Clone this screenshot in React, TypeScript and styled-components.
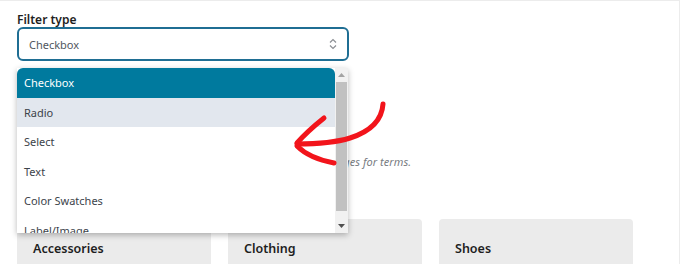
import React from 'react'
import styled, { createGlobalStyle } from 'styled-components'

const GlobalStyle = createGlobalStyle`
  html, body { margin: 0; padding: 0; background: #fff; }
  body { font-family: "Noto Sans", "Open Sans", sans-serif; }
`

const options = ['Checkbox', 'Radio', 'Select', 'Text', 'Color Swatches', 'Label/Image']
const categories = ['Accessories', 'Clothing', 'Shoes']

const Frame = styled.div`
  position: relative;
  width: 680px;
  height: 264px;
  box-sizing: border-box;
  border-top: 1px solid #ececec;
  border-right: 1px solid #ececec;
  overflow: hidden;
  padding: 11px 0 0 17px;
`

const Label = styled.div`
  font-size: 12px;
  font-weight: 600;
  color: #1e1e1e;
  line-height: 15px;
`

const SelectWrap = styled.div`
  position: relative;
  width: 332px;
`

const SelectBox = styled.div`
  height: 34px;
  box-sizing: border-box;
  border: 2px solid #1f6e93;
  border-radius: 6px;
  display: flex;
  align-items: center;
  justify-content: space-between;
  padding: 0 10px 0 10px;
  font-size: 11px;
  color: #50575e;
`

const Listbox = styled.div`
  position: absolute;
  top: 41px;
  left: 0;
  width: 331px;
  height: 165px;
  display: flex;
  background: #fff;
  box-shadow: 0 2px 6px rgba(0, 0, 0, 0.28);
  z-index: 2;
`

const Options = styled.div`
  flex: 1;
  overflow: hidden;
`

const Option = styled.div<{ $state?: 'selected' | 'hover' }>`
  height: 29.5px;
  display: flex;
  align-items: center;
  padding-left: 7px;
  font-size: 11px;
  color: ${p => (p.$state === 'selected' ? '#fff' : '#3c434a')};
  background: ${p =>
    p.$state === 'selected' ? '#007a9e' : p.$state === 'hover' ? '#e2e7ee' : '#fff'};
  border-radius: ${p => (p.$state === 'selected' ? '6px 6px 0 0' : '0')};
  white-space: nowrap;
`

const Scrollbar = styled.div`
  width: 13px;
  background: #f1f1f1;
  display: flex;
  flex-direction: column;
`

const ScrollButton = styled.div`
  height: 14px;
  display: flex;
  align-items: center;
  justify-content: center;
`

const ScrollTrack = styled.div`
  flex: 1;
  padding: 0 1px 8px;
  display: flex;
`

const Thumb = styled.div`
  flex: 1;
  background: #c1c1c1;
`

const Hint = styled.div`
  margin-top: 93px;
  font-size: 11px;
  line-height: 15px;
  letter-spacing: 0.05px;
  font-style: italic;
  color: #787c82;
  white-space: nowrap;
`

const Cards = styled.div`
  margin-top: 50px;
  display: grid;
  grid-template-columns: repeat(3, 194px);
  gap: 17px;
`

const Card = styled.div`
  height: 60px;
  background: #ebebeb;
  border-radius: 4px 4px 0 0;
  padding: 21px 16px 0;
  box-sizing: border-box;
  font-size: 12.5px;
  font-weight: 600;
  color: #1e1e1e;
`

const Arrow = styled.svg`
  position: absolute;
  left: 0;
  top: 0;
  z-index: 3;
  pointer-events: none;
`

const Chevrons = () => (
  <svg width="8" height="12" viewBox="0 0 8 12" fill="none" stroke="#8c8f94" strokeWidth="1.2">
    <path d="M1 4.5 L4 1.5 L7 4.5" />
    <path d="M1 7.5 L4 10.5 L7 7.5" />
  </svg>
)

const Tri = ({ down }: { down?: boolean }) => (
  <svg width="7" height="4" viewBox="0 0 7 4">
    <path d={down ? 'M0 0 H7 L3.5 4 Z' : 'M0 4 H7 L3.5 0 Z'} fill={down ? '#505050' : '#a3a3a3'} />
  </svg>
)

export default function App() {
  return (
    <>
      <GlobalStyle />
      <Frame>
        <Label>Filter type</Label>
        <SelectWrap>
          <SelectBox>
            Checkbox
            <Chevrons />
          </SelectBox>
          <Listbox>
            <Options>
              {options.map((o, i) => (
                <Option key={o} $state={i === 0 ? 'selected' : i === 1 ? 'hover' : undefined}>
                  {o}
                </Option>
              ))}
            </Options>
            <Scrollbar>
              <ScrollButton><Tri /></ScrollButton>
              <ScrollTrack><Thumb /></ScrollTrack>
              <ScrollButton><Tri down /></ScrollButton>
            </Scrollbar>
          </Listbox>
        </SelectWrap>
        <Hint>Choose how the attribute values are displayed, using labels or images for terms.</Hint>
        <Cards>
          {categories.map(c => (
            <Card key={c}>{c}</Card>
          ))}
        </Cards>
        <Arrow width="680" height="264" viewBox="0 0 680 264">
          <g fill="none" stroke="#f2141b" strokeWidth="5" strokeLinecap="round" strokeLinejoin="round">
            <path d="M383 103 C382 118 372 130 350 137 C334 142 314 143 297 143" />
            <path d="M324 117 C314 125 304 134 297 142" />
            <path d="M297 145 C305 153 318 159 334 162" />
          </g>
        </Arrow>
      </Frame>
    </>
  )
}
